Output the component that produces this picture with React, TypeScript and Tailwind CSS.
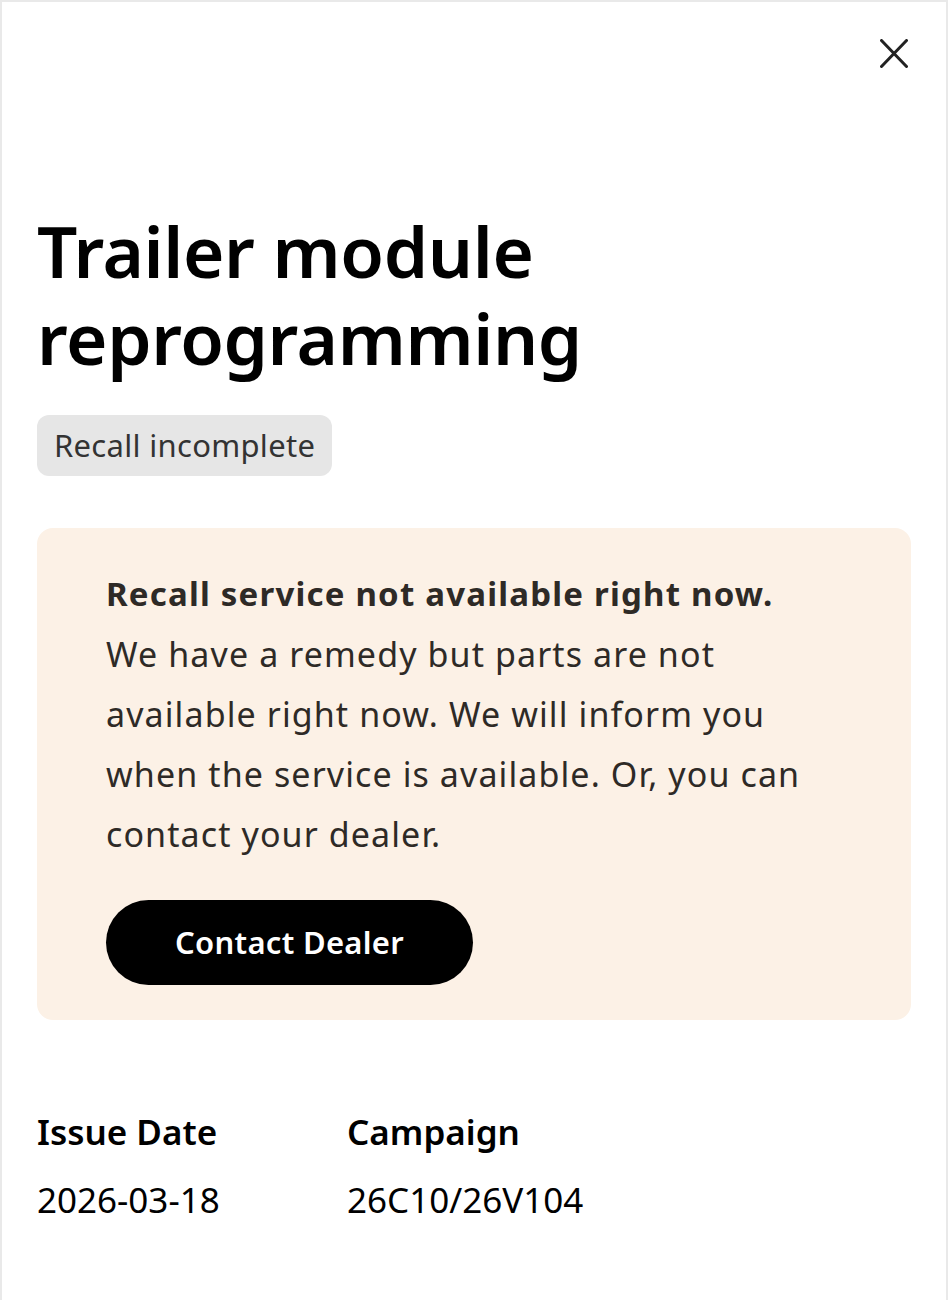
import React from 'react';

function CloseIcon() {
  return (
    <svg width="28" height="29" viewBox="0 0 28 29" fill="none" stroke="#222222" strokeWidth="3" strokeLinecap="round">
      <path d="M1.5 1.5 L26.5 27.5" />
      <path d="M26.5 1.5 L1.5 27.5" />
    </svg>
  );
}

export default function App() {
  return (
    <div className="w-[948px] h-[1300px] bg-[#e9e9e9] pt-[2px] px-[2px] font-['Noto_Sans',sans-serif]">
      <div className="h-full bg-white flex flex-col px-[35px]">
        {/* close */}
        <div className="flex justify-end pt-[37px] pr-[3px]">
          <button className="w-[28px] h-[29px] flex items-center justify-center" aria-label="Close">
            <CloseIcon />
          </button>
        </div>

        {/* heading */}
        <h1 className="mt-[139px] text-[71px] leading-[87px] font-semibold text-black tracking-[-0.4px]">
          Trailer module
          <br />
          reprogramming
        </h1>

        <div className="mt-[34px]">
          <span className="inline-flex items-center h-[61px] px-[17px] rounded-[12px] bg-[#e6e6e6] text-[31px] tracking-[0.3px] text-[#333333]">
            Recall incomplete
          </span>
        </div>

        {/* notice card */}
        <div className="mt-[52px] rounded-[16px] bg-[#fcf1e6] pl-[69px] pr-[85px] pt-[35px] pb-[35px]">
          <p className="text-[34px] leading-[60px] tracking-[1.1px] text-[#2e2a26]">
            <span className="text-[33px] font-bold tracking-[1.2px]">Recall service not available right now.</span>
            <br />
            We have a remedy but parts are not available right now. We will inform you when the service is available. Or, you can contact your dealer.
          </p>
          <button className="mt-[36px] w-[367px] h-[85px] rounded-full bg-black text-white text-[31px] font-semibold tracking-[0.3px]">
            Contact Dealer
          </button>
        </div>

        {/* details */}
        <div className="mt-[89px] flex">
          <div className="w-[310px]">
            <div className="text-[35px] leading-[46px] font-semibold text-black">Issue Date</div>
            <div className="mt-[22px] text-[35px] leading-[46px] text-black">2026-03-18</div>
          </div>
          <div>
            <div className="text-[35px] leading-[46px] font-semibold text-black">Campaign</div>
            <div className="mt-[22px] text-[35px] leading-[46px] text-black">26C10/26V104</div>
          </div>
        </div>
      </div>
    </div>
  );
}
